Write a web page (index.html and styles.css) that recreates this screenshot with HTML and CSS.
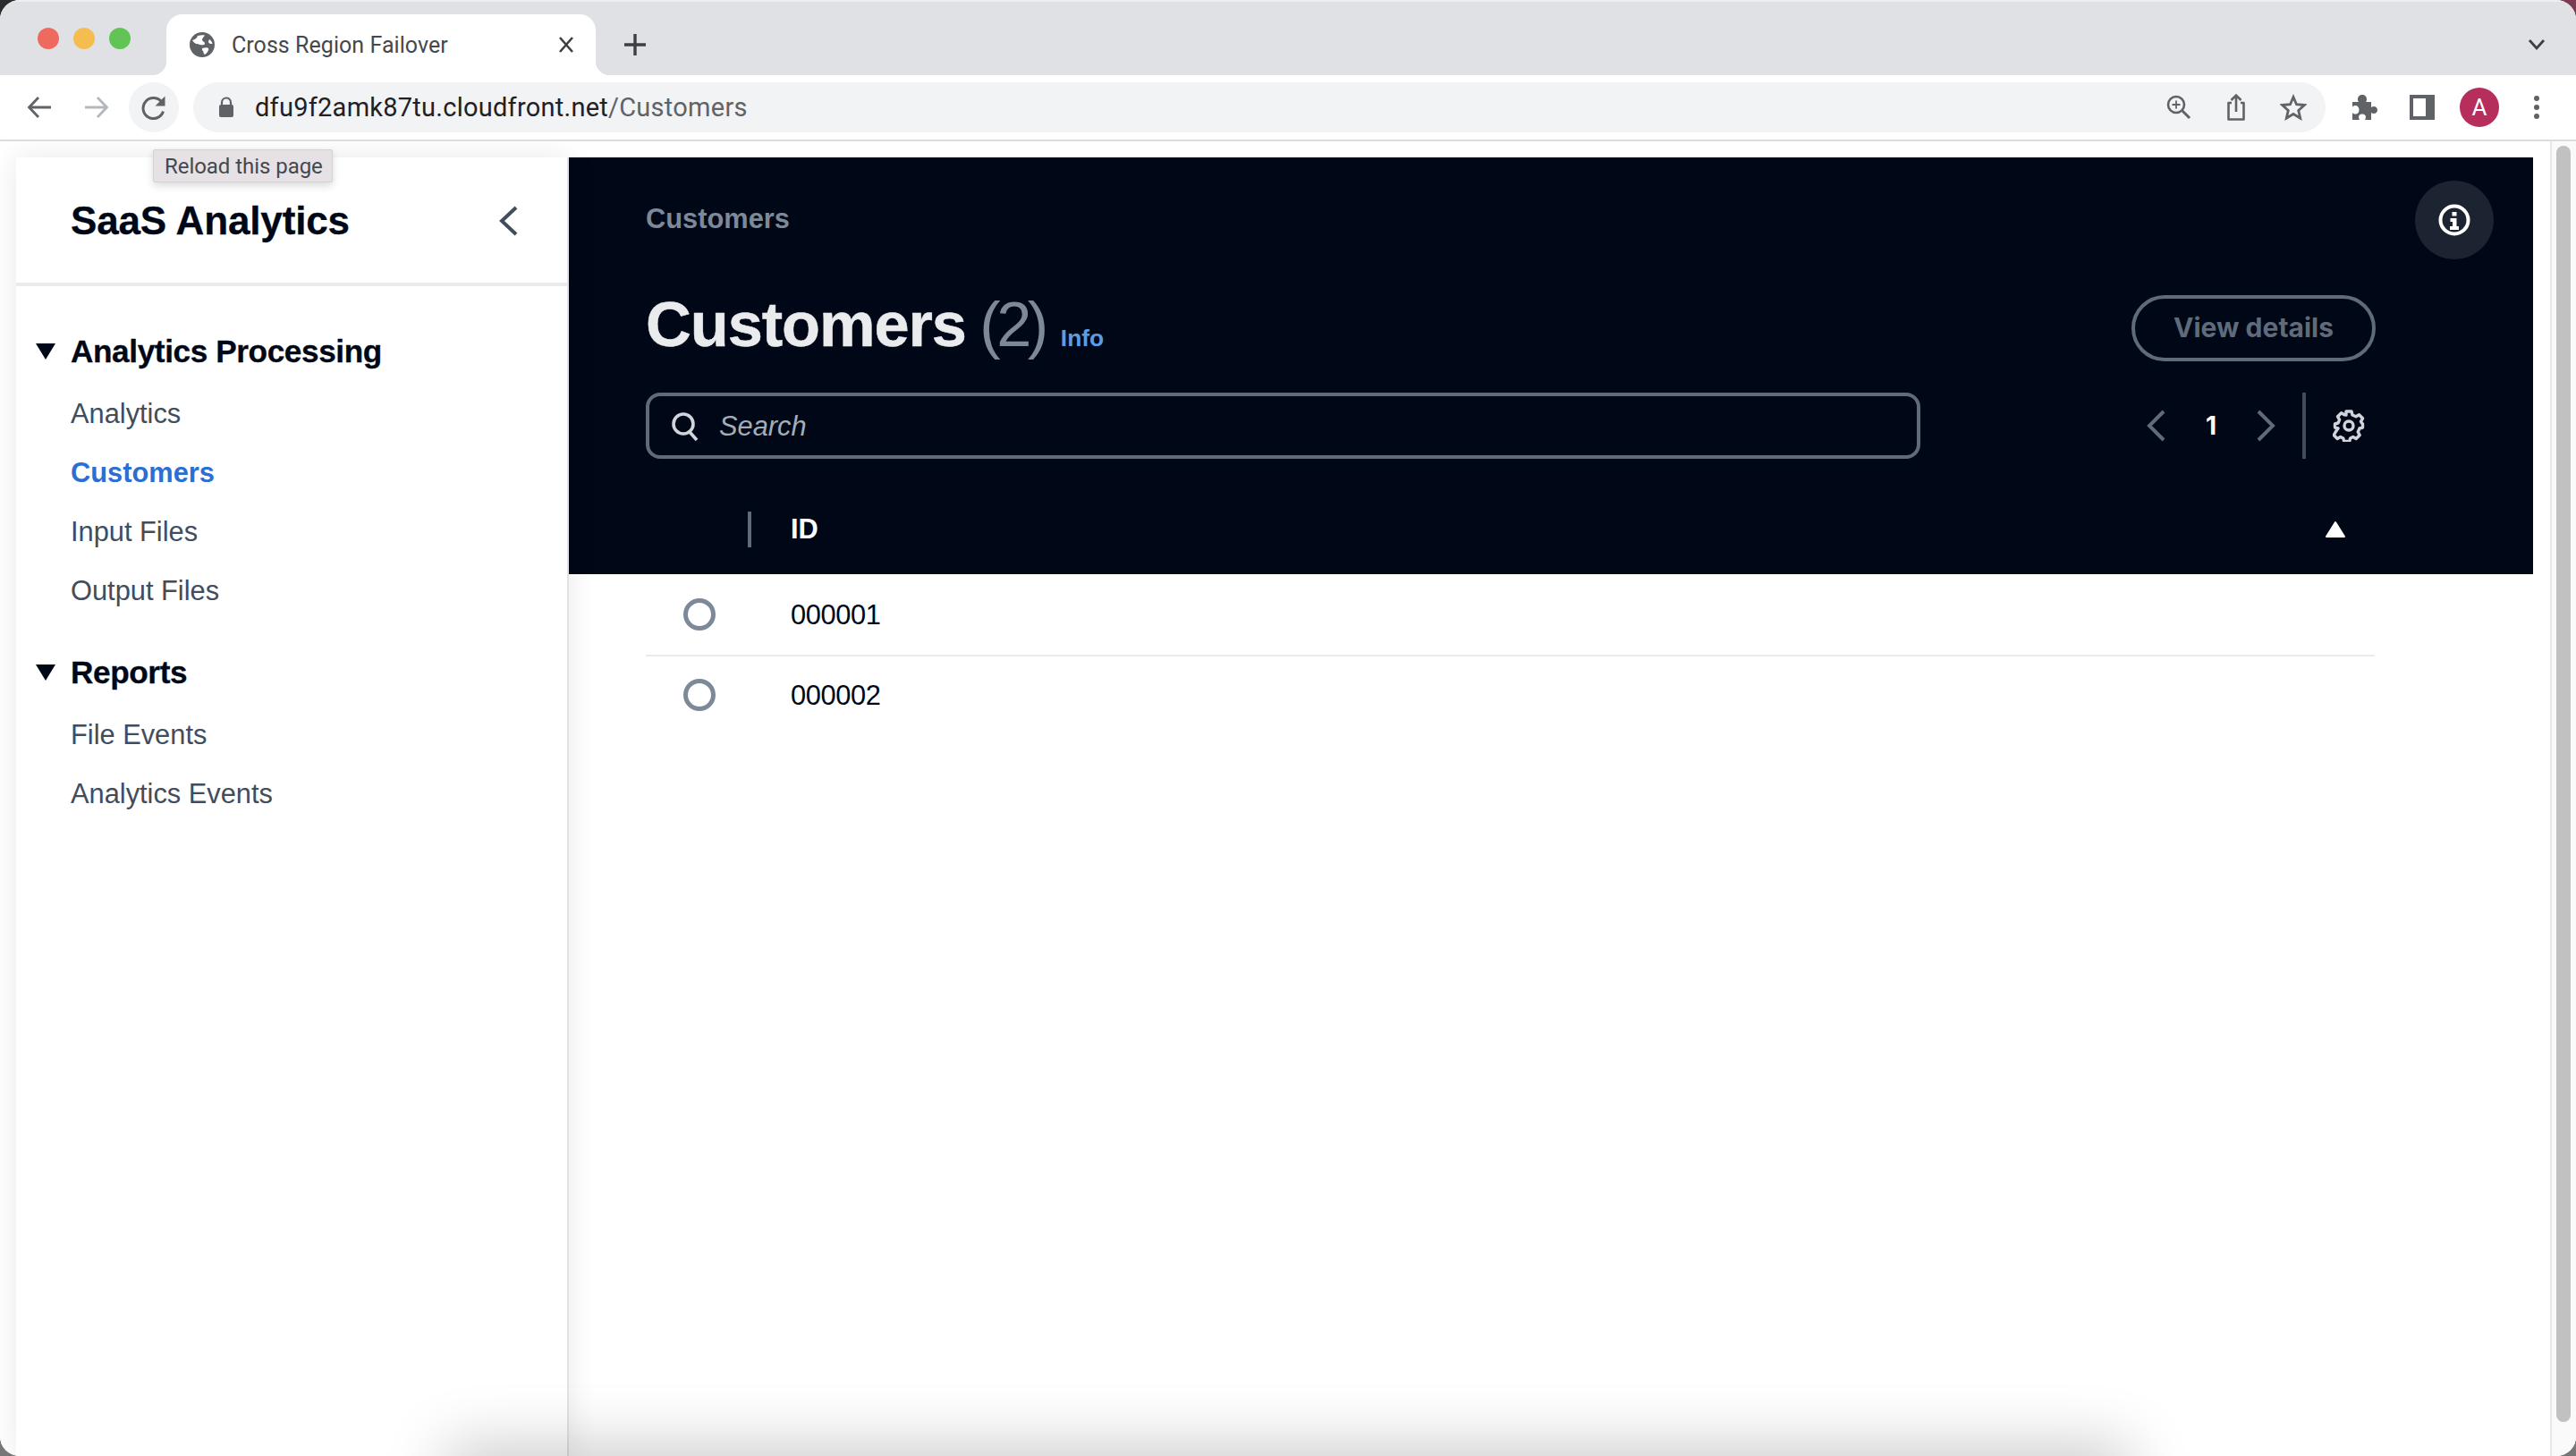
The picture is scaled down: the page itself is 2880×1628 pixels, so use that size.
FILE: index.html
```html
<!DOCTYPE html>
<html lang="en">
<head>
<meta charset="utf-8">
<title>Cross Region Failover</title>
<link rel="stylesheet" href="styles.css">
</head>
<body>
<div class="window">
  <header class="tabstrip">
    <div class="lights"><span class="light red"></span><span class="light yellow"></span><span class="light green"></span></div>
    <div class="tab">
      <svg class="globe" viewBox="0 0 28 28"><circle cx="14" cy="14" r="14" fill="#5f6368"/><path d="M3 9c3-1 5-2 6-5 3-1 6-1 8-.5-1 2-3 3-3 5 0 2 3 2 3 4s-3 2-5 1.500c-2-.5-3-1-5-1-1-1-3-2-4-4zM14 18c3-1 6-1 7 0 1 2-2 6-4 7-2-1-1-3-2-4-1 0-1-2-1-3zM22 8c2 1 3 3 3.500 5-1 0-3 0-4-1-1-1 0-3 .5-4z" fill="#fff"/></svg>
      <span class="tab-title">Cross Region Failover</span>
      <svg class="tab-close" viewBox="0 0 18 20"><path d="M2 2l14 16M16 2L2 18" stroke="#3c4043" stroke-width="2.600" fill="none"/></svg>
    </div>
    <svg class="new-tab" viewBox="0 0 26 26"><path d="M13 1v24M1 13h24" stroke="#3c4043" stroke-width="3.400" fill="none"/></svg>
    <svg class="tab-menu" viewBox="0 0 20 14"><path d="M2 2l8 9 8-9" stroke="#3c4043" stroke-width="2.800" fill="none"/></svg>
  </header>

  <nav class="toolbar">
    <svg class="tb-icon back" viewBox="0 0 28 28"><path d="M27 14H3M13 3L2.500 14 13 25" stroke="#5f6368" stroke-width="2.800" fill="none"/></svg>
    <svg class="tb-icon forward" viewBox="0 0 28 28"><path d="M1 14h24M15 3l10.500 11L15 25" stroke="#b4b7bb" stroke-width="2.800" fill="none"/></svg>
    <div class="reload">
      <svg viewBox="0 0 28 28"><path d="M24.500 18.500A11.500 11.500 0 1 1 23 8.500" stroke="#5f6368" stroke-width="3" fill="none"/><path d="M26.500 1.500V12.500h-11z" fill="#5f6368"/></svg>
    </div>
    <div class="omnibox">
      <svg class="lock" viewBox="0 0 18 24"><path d="M4 10V6.500a5 5 0 0 1 10 0V10" stroke="#5f6368" stroke-width="2.200" fill="none"/><rect x="1" y="9" width="16" height="14" rx="2" fill="#5f6368"/></svg>
      <span class="url"><span class="host">dfu9f2amk87tu.cloudfront.net</span><span class="path">/Customers</span></span>
      <svg class="om-icon om-zoom" viewBox="0 0 28 28"><circle cx="11" cy="11" r="9" stroke="#5f6368" stroke-width="2.600" fill="none"/><path d="M11 6.500v9M6.500 11h9" stroke="#5f6368" stroke-width="1.800"/><path d="M17.500 17.500L26 26" stroke="#5f6368" stroke-width="3" fill="none"/></svg>
      <svg class="om-icon om-share" viewBox="0 0 28 32"><path d="M9 11H5.500v18.500h17V11H19" stroke="#5f6368" stroke-width="2.600" fill="none" stroke-linejoin="round"/><path d="M14 21V3M8.500 8L14 2.500 19.500 8" stroke="#5f6368" stroke-width="2.600" fill="none"/></svg>
      <svg class="om-icon om-star" viewBox="0 0 30 30"><path d="M15 3.500l3.500 8.200 8.900.8-6.700 5.900 2 8.700-7.700-4.600-7.700 4.600 2-8.700-6.700-5.900 8.900-.8z" stroke="#5f6368" stroke-width="2.800" fill="none"/></svg>
    </div>
    <svg class="tb-icon puzzle" viewBox="0 0 30 30"><path d="M1 9h7c-1-1-1-2-1-3 0-3 2-5 5-5s5 2 5 5c0 1 0 2-1 3h6v6c1-.7 2-1 3-1 2.500 0 4 1.700 4 4s-1.500 4-4 4c-1 0-2-.3-3-1v8h-7c.5-1 1-2 1-3 0-2-1.500-3.500-4-3.500s-4 1.500-4 3.500c0 1 .5 2 1 3H1v-8c1 1 2 1.500 3.500 1.500 2.500 0 4-2 4-4.500S7 13 4.500 13C3 13 2 13.500 1 14.500z" fill="#5f6368"/></svg>
    <svg class="tb-icon panel" viewBox="0 0 28 28"><rect x="0" y="0" width="28" height="28" fill="#5f6368"/><rect x="4" y="4" width="14" height="20" fill="#fff"/></svg>
    <div class="avatar">A</div>
    <svg class="tb-icon kebab" viewBox="0 0 8 28"><circle cx="4" cy="4" r="3" fill="#5f6368"/><circle cx="4" cy="14" r="3" fill="#5f6368"/><circle cx="4" cy="24" r="3" fill="#5f6368"/></svg>
  </nav>

  <div class="viewport">
    <div class="page">
      <aside class="sidebar">
        <div class="side-head">
          <span class="side-title">SaaS Analytics</span>
          <svg class="side-collapse" viewBox="0 0 22 34"><path d="M19 2L3 17l16 15" stroke="#414d5c" stroke-width="4" fill="none"/></svg>
        </div>
        <div class="side-nav">
          <section class="nav-section">
            <h2 class="nav-heading"><span class="caret"></span>Analytics Processing</h2>
            <ul class="nav-list">
              <li>Analytics</li>
              <li class="active">Customers</li>
              <li>Input Files</li>
              <li>Output Files</li>
            </ul>
          </section>
          <section class="nav-section">
            <h2 class="nav-heading"><span class="caret"></span>Reports</h2>
            <ul class="nav-list">
              <li>File Events</li>
              <li>Analytics Events</li>
            </ul>
          </section>
        </div>
      </aside>

      <main class="main">
        <div class="dark">
          <div class="crumb">Customers</div>
          <div class="title-row">
            <h1 class="title">Customers <span class="count">(2)</span></h1>
            <span class="info-link">Info</span>
            <button class="details-btn">View details</button>
          </div>
          <div class="tools-row">
            <div class="search">
              <svg class="search-icon" viewBox="0 0 32 34"><circle cx="14" cy="14" r="11" stroke="#d1d5db" stroke-width="3.600" fill="none"/><path d="M21 23l8 9" stroke="#d1d5db" stroke-width="3.600" fill="none"/></svg>
              <span class="search-text">Search</span>
            </div>
            <div class="pager">
              <svg class="pg-arrow" viewBox="0 0 22 36"><path d="M19 2L3 18l16 16" stroke="#5f6b7a" stroke-width="4" fill="none"/></svg>
              <span class="pg-num">1</span>
              <svg class="pg-arrow" viewBox="0 0 22 36"><path d="M3 2l16 16L3 34" stroke="#5f6b7a" stroke-width="4" fill="none"/></svg>
              <span class="pg-sep"></span>
              <svg class="gear" viewBox="0 0 36 36"><path d="M15 2h6l1 4 4 1.800 3.500-2 4 4-2 3.500L32.500 15l1 1v4l-3.500 1-1.800 4 2 3.500-4 4-3.500-2-3 1.500-1 3.500h-6l-1-3.500-3-1.500-3.500 2-4-4 2-3.500L6 21l-3.500-1v-4L6 15l1.600-3.700-2-3.500 4-4 3.500 2L15 6z" stroke="#d1d5db" stroke-width="3.400" fill="none" stroke-linejoin="round"/><circle cx="18" cy="18" r="5" stroke="#d1d5db" stroke-width="3.400" fill="none"/></svg>
            </div>
          </div>
          <div class="thead">
            <span class="th-sep"></span>
            <span class="th-label">ID</span>
            <svg class="sort" viewBox="0 0 24 20"><path d="M12 2l10 16H2z" fill="#fff" stroke="#fff" stroke-width="2" stroke-linejoin="round"/></svg>
          </div>
        </div>
        <div class="rows">
          <div class="row"><span class="radio"></span><span class="cell">000001</span></div>
          <div class="row"><span class="radio"></span><span class="cell">000002</span></div>
        </div>
      </main>
    </div>
    <div class="scrollbar"><span class="thumb"></span></div>

    <button class="help-btn"><svg viewBox="0 0 36 36"><circle cx="18" cy="18" r="15.500" stroke="#fff" stroke-width="4" fill="none"/><path d="M15.500 9h5v4.500h-5zM13.500 16h7v9h2.500v4h-10v-4h3v-5h-2.500z" fill="#fff"/></svg></button>
    <div class="tooltip">Reload this page</div>
    <div class="bottom-shade"></div>
  </div>
</div>
</body>
</html>
```
FILE: styles.css
```css
* { box-sizing: border-box; }
html, body { margin: 0; padding: 0; width: 2880px; height: 1628px; overflow: hidden; }
body { font-family: "Liberation Sans", Arial, sans-serif; color: #000716; background: radial-gradient(circle at 100% 0, #7a3a52 40px, transparent 41px), linear-gradient(#2c2c2e 50%, #777 50%); }
h1, h2, ul { margin: 0; padding: 0; }
svg { display: block; flex: none; }

.window { width: 2880px; height: 1628px; display: flex; flex-direction: column; border-radius: 22px; overflow: hidden; background: #fff; }

/* browser chrome */
.tabstrip { height: 84px; flex: none; background: #dfe1e5; display: flex; align-items: flex-end; position: relative; border-top: 2px solid #eceef0; }
.lights { display: flex; gap: 16px; width: 186px; padding: 0 0 29px 42px; }
.light { width: 24px; height: 24px; border-radius: 50%; }
.red { background: #ee6a5e; }
.yellow { background: #f5bd4f; }
.green { background: #61c454; }
.tab { width: 480px; height: 68px; background: #fff; border-radius: 18px 18px 0 0; display: flex; align-items: center; padding: 0 24px 0 26px; position: relative; }
.tab::before, .tab::after { content: ""; position: absolute; bottom: 0; width: 16px; height: 16px; }
.tab::before { left: -16px; background: radial-gradient(circle at 0 0, #dfe1e5 16px, #fff 16.500px); }
.tab::after { right: -16px; background: radial-gradient(circle at 100% 0, #dfe1e5 16px, #fff 16.500px); }
.globe { width: 28px; height: 28px; margin-right: 19px; }
.tab-title { font-family: Roboto, sans-serif; font-size: 25px; color: #45484c; flex: 1; letter-spacing: .05px; }
.tab-close { width: 18px; height: 20px; }
.new-tab { width: 26px; height: 26px; margin: 0 0 21px 31px; }
.tab-menu { width: 20px; height: 14px; margin: 0 34px 27px auto; }

.toolbar { height: 74px; flex: none; background: #fff; border-bottom: 2px solid #dadce0; display: flex; align-items: center; position: relative; }
.tb-icon { flex: none; }
.back { width: 28px; height: 28px; margin-left: 30px; }
.forward { width: 28px; height: 28px; margin-left: 36px; }
.reload { width: 56px; height: 56px; margin-left: 22px; border-radius: 50%; background: #f1f3f4; display: flex; align-items: center; justify-content: center; }
.reload svg { width: 28px; height: 28px; }
.omnibox { width: 2384px; height: 56px; margin-left: 16px; background: #f1f3f4; border-radius: 28px; display: flex; align-items: center; padding-left: 28px; }
.lock { width: 18px; height: 24px; margin-right: 23px; }
.url { font-family: Roboto, sans-serif; font-size: 29px; letter-spacing: .25px; flex: 1; }
.host { color: #202124; }
.path { color: #5f6368; }
.om-icon { flex: none; }
.om-zoom { width: 28px; height: 28px; margin-right: 36px; }
.om-share { width: 28px; height: 32px; margin-right: 35px; }
.om-star { width: 30px; height: 30px; margin-right: 21px; }
.puzzle { width: 30px; height: 30px; margin-left: 29px; }
.panel { width: 28px; height: 28px; margin-left: 35px; }
.avatar { width: 44px; height: 44px; margin-left: 28px; border-radius: 50%; background: #b52e5c; color: #fff; font-family: Roboto, sans-serif; font-size: 26px; display: flex; align-items: center; justify-content: center; }
.kebab { width: 8px; height: 28px; margin-left: 38px; }

/* viewport */
.viewport { flex: 1; display: flex; position: relative; overflow: hidden; background: #fff; }
.page { flex: 1; display: flex; align-items: stretch; padding: 18px 19px 0 18px; }

.sidebar { width: 618px; flex: none; background: #fff; border-right: 2px solid #e3e3e3; box-shadow: 0 0 32px rgba(0,0,0,.09); position: relative; z-index: 1; }
.side-head { height: 144px; border-bottom: 4px solid #e9ebed; display: flex; align-items: center; justify-content: space-between; padding: 2px 54px 0 61px; }
.side-title { font-size: 44px; font-weight: 700; letter-spacing: -.14px; line-height: 56px; -webkit-text-stroke: .3px #000716; }
.side-collapse { width: 22px; height: 34px; }
.side-nav { padding: 49px 0 0 22px; }
.nav-section { margin-bottom: 45px; }
.nav-heading { display: flex; align-items: center; font-size: 35.200px; font-weight: 700; line-height: 48px; letter-spacing: -.4px; -webkit-text-stroke: .3px #000716; }
.caret { width: 0; height: 0; border-left: 11px solid transparent; border-right: 11px solid transparent; border-top: 18px solid #000716; margin-right: 17px; }
.nav-list { list-style: none; padding: 24px 0 0 39px; }
.nav-list li { font-size: 30.800px; line-height: 44px; color: #414d5c; margin-bottom: 22px; }
.nav-list li:last-child { margin-bottom: 0; }
.nav-list .active { color: #2b6fd4; font-weight: 700; }

.main { flex: 1; display: flex; flex-direction: column; min-width: 0; background: #fff; }
.dark { background: #000716; padding: 47px 176px 0 86px; height: 466px; }
.crumb { font-size: 30.800px; font-weight: 700; line-height: 44px; color: #7d8998; }
.title-row { display: flex; align-items: center; height: 74px; margin-top: 63px; }
.title { font-size: 70.400px; font-weight: 700; line-height: 74px; color: #e9ebed; letter-spacing: -1.100px; word-spacing: -3px; white-space: pre; margin-top: -9px; -webkit-text-stroke: .5px #e9ebed; }
.count { font-weight: 400; color: #7d8998; letter-spacing: -4.500px; -webkit-text-stroke: 0; }
.info-link { font-size: 26.400px; font-weight: 700; color: #5c9ce6; margin: 22px 0 0 18px; }
.details-btn { margin-left: auto; width: 273px; height: 74px; border: 4px solid #5f6b7a; border-radius: 37px; background: transparent; color: #5f6b7a; font: 700 30px "Inter", sans-serif; padding: 0 0 2px; }
.tools-row { display: flex; align-items: stretch; height: 74px; margin-top: 35px; }
.search { width: 1425px; border: 4px solid #5f6b7a; border-radius: 16px; display: flex; align-items: center; padding: 2px 0 0 24px; }
.search-icon { width: 32px; height: 34px; margin-right: 22px; }
.search-text { font-size: 30.800px; font-style: italic; color: #a3adb8; }
.pager { margin-left: auto; display: flex; align-items: center; width: 266px; padding-left: 10px; }
.pg-arrow { width: 22px; height: 36px; }
.pg-num { width: 100px; text-align: center; font: 700 28px "Inter", sans-serif; color: #fff; }
.pg-sep { width: 4px; height: 74px; background: #414d5c; margin-left: 30px; }
.gear { width: 36px; height: 36px; margin-left: 30px; }
.thead { display: flex; align-items: center; height: 129px; padding: 29px 33px 0 114px; }
.th-sep { width: 4px; height: 40px; background: #5f6b7a; }
.th-label { font-size: 30.800px; font-weight: 700; color: #fff; margin-left: 44px; flex: 1; line-height: 44px; }
.sort { width: 24px; height: 20px; }

.rows { margin: 0 177px 0 86px; }
.row { height: 90px; display: flex; align-items: center; padding-left: 42px; }
.row + .row { border-top: 2px solid #e9ebed; height: 88px; }
.radio { width: 36px; height: 36px; border: 5px solid #7d8998; border-radius: 50%; flex: none; }
.cell { font-size: 30.800px; margin-left: 84px; letter-spacing: -.4px; padding-top: 1px; }

.scrollbar { width: 29px; flex: none; background: #fafafa; border-left: 2px solid #e8e8e8; padding: 5px 6px 0 5px; }
.thumb { display: block; width: 16px; height: 1427px; background: #c1c1c1; border-radius: 8px; }

/* overlays */
.help-btn { position: absolute; left: 2700px; top: 44px; width: 88px; height: 88px; border: 0; border-radius: 50%; background: #1b2430; display: flex; align-items: center; justify-content: center; padding: 0; z-index: 2; }
.help-btn svg { width: 36px; height: 36px; }
.tooltip { position: absolute; left: 171px; top: 9px; width: 201px; height: 37px; background: #e5e1e4; border: 1px solid #d5d2d4; border-radius: 2px; box-shadow: 0 4px 10px rgba(0,0,0,.14); font-family: Roboto, sans-serif; font-size: 24px; line-height: 36px; color: #45484c; padding-left: 12px; z-index: 3; letter-spacing: -.05px; }
.bottom-shade { position: absolute; left: 510px; right: 510px; bottom: -60px; height: 60px; box-shadow: 0 0 70px 10px rgba(0,0,0,.22); z-index: 2; }
```
